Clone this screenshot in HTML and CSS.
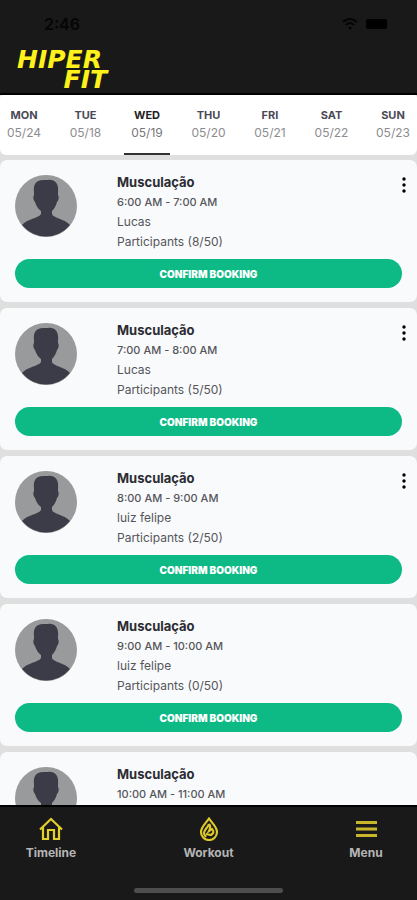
FILE: index.html
```html
<!DOCTYPE html>
<html lang="en">
<head>
<meta charset="utf-8">
<meta name="viewport" content="width=device-width, initial-scale=1">
<title>Hiper Fit</title>
<link rel="stylesheet" href="styles.css">
</head>
<body>
<svg class="defs" aria-hidden="true">
  <symbol id="person" viewBox="0 0 62 62">
    <circle cx="31" cy="31" r="31" fill="#999a9b"/>
    <path fill="#3c3c48" d="M19 17C18 10 21 5 28 5H33C40 4 44 9 43 17V20C44 21 44 25 42 27C41 31 39 34 37 36V39C38 43 50 44 55 50A31 31 0 0 1 7 50C12 44 24 43 26 39V36C23 34 21 30 20 27C18 25 18 21 19 20Z"/>
  </symbol>
  <symbol id="dots" viewBox="0 0 4 16">
    <circle cx="2" cy="2" r="1.700"/><circle cx="2" cy="8" r="1.700"/><circle cx="2" cy="14" r="1.700"/>
  </symbol>
</svg>
<header class="header">
  <div class="status">
    <span>2:46</span>
    <span class="status-icons">
      <svg width="16" height="12" viewBox="0 0 16 12" fill="none" stroke="#050505" stroke-width="2"><path d="M1 4Q8-2 15 4M4 7Q8 3 12 7"/><path d="M6 9.500Q8 8 10 9.500L8 12Z" fill="#050505" stroke="none"/></svg>
      <span class="battery"></span>
    </span>
  </div>
  <h1 class="logo"><span>HIPER</span><span class="logo-second">FIT</span></h1>
</header>
<nav class="days" aria-label="Days">
  <a class="day" href="#"><b>MON</b><span>05/24</span></a>
  <a class="day" href="#"><b>TUE</b><span>05/18</span></a>
  <a class="day day-active" href="#" aria-current="date"><b>WED</b><span>05/19</span></a>
  <a class="day" href="#"><b>THU</b><span>05/20</span></a>
  <a class="day" href="#"><b>FRI</b><span>05/21</span></a>
  <a class="day" href="#"><b>SAT</b><span>05/22</span></a>
  <a class="day" href="#"><b>SUN</b><span>05/23</span></a>
</nav>
<main class="list">
  <article class="card">
    <div class="info">
      <svg class="avatar"><use href="#person"/></svg>
      <div class="details"><h2>Musculação</h2><p class="time">6:00 AM - 7:00 AM</p><p>Lucas</p><p>Participants (8/50)</p></div>
      <button class="more" aria-label="More options"><svg width="4" height="16"><use href="#dots"/></svg></button>
    </div>
    <button class="confirm">CONFIRM BOOKING</button>
  </article>
  <article class="card">
    <div class="info">
      <svg class="avatar"><use href="#person"/></svg>
      <div class="details"><h2>Musculação</h2><p class="time">7:00 AM - 8:00 AM</p><p>Lucas</p><p>Participants (5/50)</p></div>
      <button class="more" aria-label="More options"><svg width="4" height="16"><use href="#dots"/></svg></button>
    </div>
    <button class="confirm">CONFIRM BOOKING</button>
  </article>
  <article class="card">
    <div class="info">
      <svg class="avatar"><use href="#person"/></svg>
      <div class="details"><h2>Musculação</h2><p class="time">8:00 AM - 9:00 AM</p><p>luiz felipe</p><p>Participants (2/50)</p></div>
      <button class="more" aria-label="More options"><svg width="4" height="16"><use href="#dots"/></svg></button>
    </div>
    <button class="confirm">CONFIRM BOOKING</button>
  </article>
  <article class="card">
    <div class="info">
      <svg class="avatar"><use href="#person"/></svg>
      <div class="details"><h2>Musculação</h2><p class="time">9:00 AM - 10:00 AM</p><p>luiz felipe</p><p>Participants (0/50)</p></div>
    </div>
    <button class="confirm">CONFIRM BOOKING</button>
  </article>
  <article class="card">
    <div class="info">
      <svg class="avatar"><use href="#person"/></svg>
      <div class="details"><h2>Musculação</h2><p class="time">10:00 AM - 11:00 AM</p></div>
    </div>
  </article>
</main>
<footer class="footer">
  <nav class="tabs" aria-label="Main">
    <a class="tab" href="#">
      <svg width="24" height="24" viewBox="0 0 24 24" fill="none" stroke="#e3d02b" stroke-width="2.200"><path d="M1 12.500L12 2L23 12.500M4 10V22H9V13H15V22H20V10"/></svg>
      <span>Timeline</span>
    </a>
    <a class="tab" href="#">
      <svg width="24" height="24" viewBox="0 0 24 24" fill="none" stroke="#dcca2a" stroke-width="2.200"><path d="M12 1.500C15 6 20 10 20 15A8 8 0 0 1 4 15C4 10 9 6 12 1.500Z"/><path d="M12 7C11 11 7 12 7 16C7 18 8 19 9 20M12 7C14 9 13 12 12 14L15 12C17 14 17 16 14 18L9 17"/></svg>
      <span>Workout</span>
    </a>
    <a class="tab" href="#">
      <svg width="24" height="24" viewBox="0 0 24 24" fill="none" stroke="#c9b52c" stroke-width="3"><path d="M2 5.500H23M2 12H23M2 18.500H23"/></svg>
      <span>Menu</span>
    </a>
  </nav>
  <div class="home-bar"></div>
</footer>
</body>
</html>
```
FILE: styles.css
```css
* { box-sizing: border-box; margin: 0; padding: 0; }
body {
  display: flex;
  flex-direction: column;
  height: 100vh;
  background: #dfdfdf;
  color: #55565a;
  font-family: Inter, "Liberation Sans", sans-serif;
  font-size: 12px;
}
a { color: inherit; text-decoration: none; }
button { border: 0; font: inherit; cursor: pointer; }
.defs { position: absolute; width: 0; height: 0; }

.header {
  flex: none;
  padding: 14px 17px 3px;
  background: #191919;
  border-bottom: 2px solid #000;
}
.status {
  display: flex;
  align-items: center;
  justify-content: space-between;
  height: 20px;
  margin-bottom: 16px;
  padding: 0 13px 0 27px;
  color: #050505;
  font-size: 16px;
  font-weight: 600;
}
.status-icons { display: flex; align-items: center; gap: 8px; }
.battery { width: 21px; height: 10px; border-radius: 2px; background: #000; }
.logo {
  display: flex;
  flex-direction: column;
  width: 94px;
  color: #fff21a;
  font-family: "DejaVu Sans", sans-serif;
  font-size: 25px;
  font-style: italic;
  font-weight: 700;
  line-height: 20px;
}
.logo-second { padding-right: 4px; text-align: right; }

.days {
  flex: none;
  display: flex;
  justify-content: space-between;
  margin-bottom: 5px;
  padding: 0 1px;
  border-radius: 3px 3px 6px 6px;
  background: #fff;
}
.day {
  display: flex;
  flex-direction: column;
  align-items: center;
  width: 46px;
  padding: 12px 0;
  border-bottom: 2px solid transparent;
  color: #8c8c90;
  line-height: 17px;
}
.day b { color: #4a4a55; font-size: 11px; font-weight: 700; }
.day-active { border-color: #333; }
.day-active, .day-active b { color: #222; }
.day-active span { color: #77777b; }

.list {
  flex: 1;
  min-height: 0;
  display: flex;
  flex-direction: column;
  gap: 6px;
  overflow-y: auto;
  scrollbar-width: none;
}
.card {
  flex: none;
  padding: 12px 15px 14px;
  border-radius: 7px;
  background: #f9fafc;
}
.info { display: flex; align-items: flex-start; margin-bottom: 7px; }
.avatar { flex: none; width: 62px; height: 62px; margin: 3px 40px 0 0; }
.details { flex: 1; line-height: 20px; }
.details h2 { color: #2c2c33; font-size: 13px; font-weight: 700; }
.details .time { font-size: 11px; font-weight: 500; }
.more { display: flex; margin-right: -4px; padding: 5px 0; background: none; }
.confirm {
  display: block;
  width: 100%;
  height: 29px;
  border-radius: 15px;
  background: #0dba85;
  color: #fff;
  font-size: 10px;
  font-weight: 900;
}

.footer {
  flex: none;
  padding: 10px 1px 7px;
  border-top: 2px solid #000;
  background: #191919;
}
.tabs { display: flex; justify-content: space-between; margin-bottom: 27px; }
.tab {
  display: flex;
  flex-direction: column;
  align-items: center;
  gap: 4px;
  width: 100px;
  color: #b5b5b5;
  font-weight: 700;
  line-height: 16px;
}
.home-bar { width: 36%; height: 5px; margin: 0 auto; border-radius: 3px; background: #4e4e4e; }
```
